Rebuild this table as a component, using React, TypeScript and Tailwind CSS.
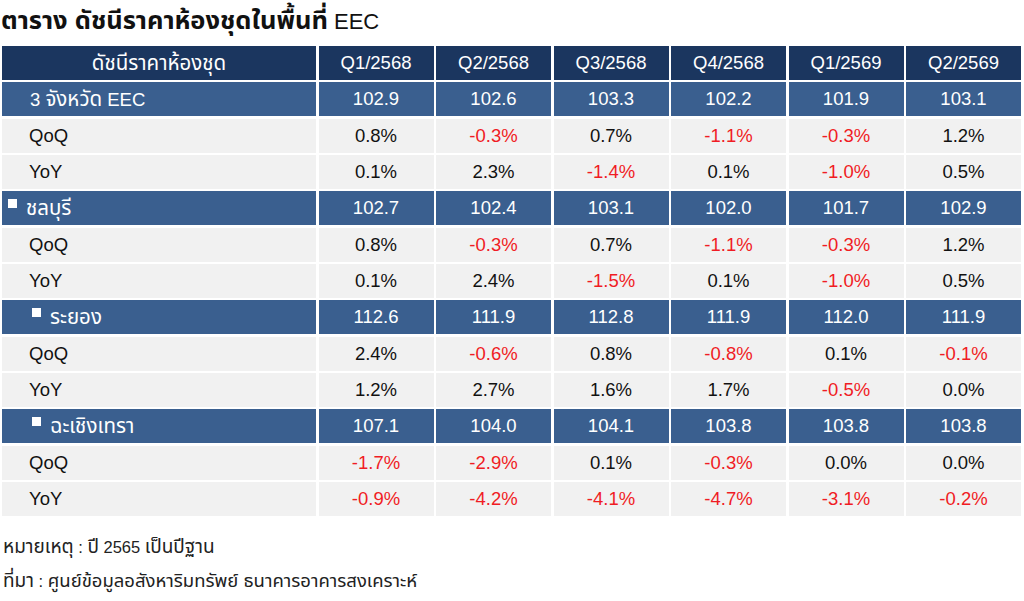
import React from "react";

type Row = { kind: "main" | "sub"; label: React.ReactNode; bullet?: number; values: string[] };

const cols = ["Q1/2568", "Q2/2568", "Q3/2568", "Q4/2568", "Q1/2569", "Q2/2569"];

function T({ children }: { children: React.ReactNode }) {
  return <span className="text-[20.5px]">{children}</span>;
}

const rows: Row[] = [
  { kind: "main", label: <>3 <T>จังหวัด</T> EEC</>, values: ["102.9", "102.6", "103.3", "102.2", "101.9", "103.1"] },
  { kind: "sub", label: "QoQ", values: ["0.8%", "-0.3%", "0.7%", "-1.1%", "-0.3%", "1.2%"] },
  { kind: "sub", label: "YoY", values: ["0.1%", "2.3%", "-1.4%", "0.1%", "-1.0%", "0.5%"] },
  { kind: "main", label: <T>ชลบุรี</T>, bullet: 1, values: ["102.7", "102.4", "103.1", "102.0", "101.7", "102.9"] },
  { kind: "sub", label: "QoQ", values: ["0.8%", "-0.3%", "0.7%", "-1.1%", "-0.3%", "1.2%"] },
  { kind: "sub", label: "YoY", values: ["0.1%", "2.4%", "-1.5%", "0.1%", "-1.0%", "0.5%"] },
  { kind: "main", label: <T>ระยอง</T>, bullet: 2, values: ["112.6", "111.9", "112.8", "111.9", "112.0", "111.9"] },
  { kind: "sub", label: "QoQ", values: ["2.4%", "-0.6%", "0.8%", "-0.8%", "0.1%", "-0.1%"] },
  { kind: "sub", label: "YoY", values: ["1.2%", "2.7%", "1.6%", "1.7%", "-0.5%", "0.0%"] },
  { kind: "main", label: <T>ฉะเชิงเทรา</T>, bullet: 2, values: ["107.1", "104.0", "104.1", "103.8", "103.8", "103.8"] },
  { kind: "sub", label: "QoQ", values: ["-1.7%", "-2.9%", "0.1%", "-0.3%", "0.0%", "0.0%"] },
  { kind: "sub", label: "YoY", values: ["-0.9%", "-4.2%", "-4.1%", "-4.7%", "-3.1%", "-0.2%"] },
];

const font = { fontFamily: '"Liberation Sans", Arial, "Noto Sans Thai", "Noto Sans", sans-serif' };

function Label({ row }: { row: Row }) {
  if (row.kind === "sub") {
    return <div className="flex h-[34px] items-center bg-[#f1f1f1] pl-[27px] text-[18.5px] text-[#111]">{row.label}</div>;
  }
  return (
    <div
      className={
        "flex h-[34px] items-center bg-[#3a5f8f] text-[18.5px] text-white " +
        (row.bullet === 1 ? "pl-[6px]" : row.bullet === 2 ? "pl-[30px]" : "pl-[28px]")
      }
    >
      {row.bullet ? <span className="mr-[9px] mb-[9px] inline-block h-[9px] w-[9px] shrink-0 bg-white" /> : null}
      <span className="whitespace-nowrap">{row.label}</span>
    </div>
  );
}

export default function App() {
  return (
    <div className="h-[601px] w-[1024px] overflow-hidden bg-white" style={font}>
      <div className="pl-[1px] pt-[4px] text-[22px] leading-[33px] text-[#111]">
        <span className="text-[25.5px] font-bold">ตาราง ดัชนีราคาห้องชุดในพื้นที่</span> EEC
      </div>
      <div className="ml-[2px] mt-[8px] grid w-[1019px] grid-cols-[314px_repeat(6,1fr)] gap-x-[2.5px] gap-y-[2.33px]">
        <div className="flex h-[34px] items-center justify-center bg-[#1b365f] text-[20.5px] text-white">ดัชนีราคาห้องชุด</div>
        {cols.map((c) => (
          <div key={c} className="flex h-[34px] items-center justify-center bg-[#1b365f] text-[18.5px] text-white">
            {c}
          </div>
        ))}
        {rows.map((r, i) => (
          <React.Fragment key={i}>
            <Label row={r} />
            {r.values.map((v, j) =>
              r.kind === "main" ? (
                <div key={j} className="flex h-[34px] items-center justify-center bg-[#3a5f8f] text-[18.5px] text-white">
                  {v}
                </div>
              ) : (
                <div
                  key={j}
                  className={
                    "flex h-[34px] items-center justify-center bg-[#f1f1f1] text-[18.5px] " +
                    (v.startsWith("-") ? "text-[#f01c24]" : "text-[#111]")
                  }
                >
                  {v}
                </div>
              )
            )}
          </React.Fragment>
        ))}
      </div>
      <div className="pl-[3px] pt-[14px] text-[16.5px] leading-[34px] text-[#222]">
        <div>
          <span className="text-[19px]">หมายเหตุ</span> : <span className="text-[19px]">ปี</span> 2565{" "}
          <span className="text-[19px]">เป็นปีฐาน</span>
        </div>
        <div>
          <span className="text-[19px]">ที่มา</span> :{" "}
          <span className="text-[18.5px]">ศูนย์ข้อมูลอสังหาริมทรัพย์ ธนาคารอาคารสงเคราะห์</span>
        </div>
      </div>
    </div>
  );
}
